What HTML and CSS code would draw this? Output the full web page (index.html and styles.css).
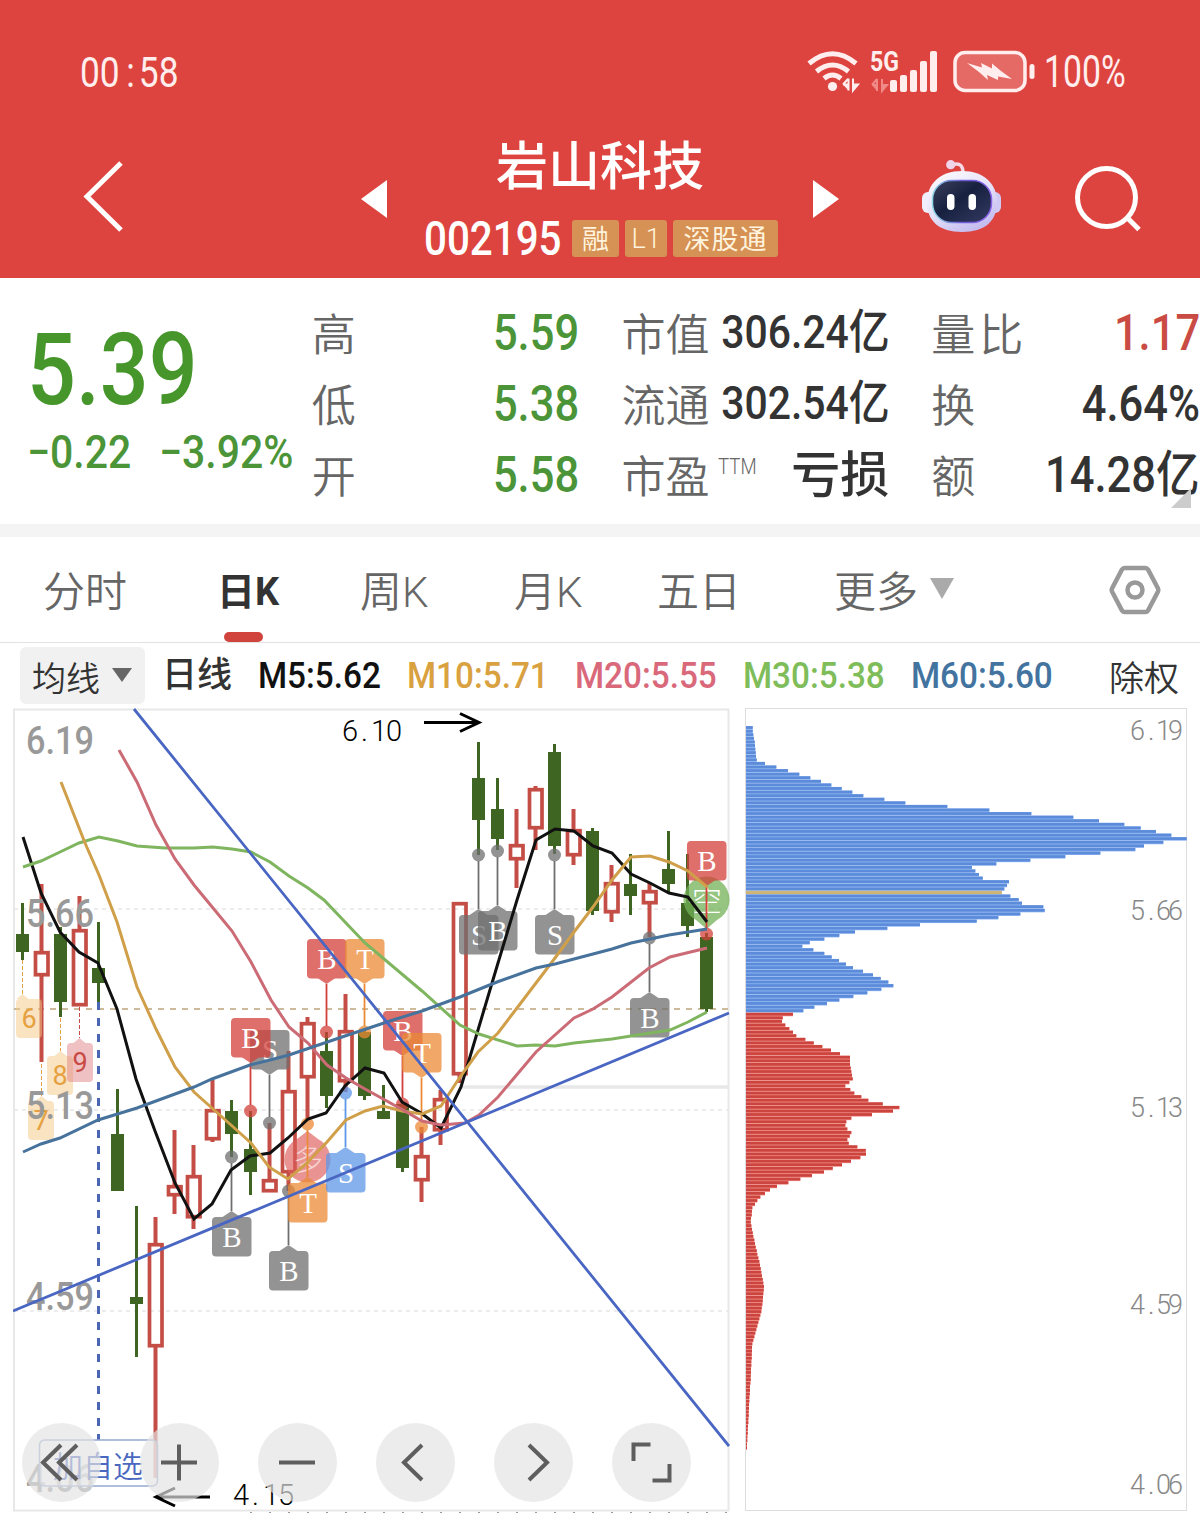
FILE: index.html
```html
<!DOCTYPE html>
<html lang="zh-CN">
<head>
    <meta charset="UTF-8">
    <meta name="viewport" content="width=device-width, initial-scale=1.0">
    <title>岩山科技 002195</title>
    <link rel="stylesheet" href="styles.css">
</head>
<body>
    <header class="header">
        <div class="status-bar">
            <span class="clock">00<i>:</i>58</span>
            <div class="status-right">
                <svg class="status-icons" width="232" height="50" viewBox="806 48 232 50">
                    <!-- wifi -->
                    <g fill="none" stroke="#ffeeed" stroke-width="5">
                        <path d="M809 64.500Q832.500 45 856 64.500"/>
                        <path d="M816.500 72.500Q832.500 59.500 848.500 72.500"/>
                        <path d="M824 79.500Q832.500 72.500 841 79.500"/>
                    </g>
                    <circle cx="832.500" cy="87.500" r="4.600" fill="#ffeeed"/>
                    <path d="M843 85.500H848.500V79.500V91.500M848 80L843 85.500M853 79.500V91.500L858 85.500H853" fill="#ffeeed" stroke="#ffeeed" stroke-width="2"/>
                    <!-- 信号 -->
                    <text class="net" x="870" y="72" textLength="29" lengthAdjust="spacingAndGlyphs">5G</text>
                    <path d="M872 86H877V80V92M877 80L872 86M882 80V92L887 86H882" fill="#f08a86" stroke="#f08a86" stroke-width="2"/>
                    <g fill="#ffeeed">
                        <rect x="890" y="81" width="7" height="12" rx="2"/>
                        <rect x="900" y="76" width="7" height="17" rx="2"/>
                        <rect x="910" y="71" width="7" height="22" rx="2"/>
                        <rect x="920" y="62" width="7" height="31" rx="2"/>
                        <rect x="930" y="52" width="7" height="41" rx="2"/>
                    </g>
                    <!-- 电池 -->
                    <rect x="955" y="53.500" width="70" height="38" rx="10" fill="#e56a66" stroke="#ffeeed" stroke-width="3.500"/>
                    <rect x="1029.500" y="65" width="5" height="15" rx="2.500" fill="#ffeeed"/>
                    <path d="M967 64L982 68.500L981 64L992 69.500L992 64.500L1001 72L1012 80L998 77.500L998 81L987 76L988 81L979 73Z" fill="#ffeeed"/>
                </svg>
                <span class="battery">100%</span>
            </div>
        </div>
        <div class="title-bar">
            <svg class="back" width="42" height="74" viewBox="0 0 42 74"><path d="M39 3L5 36.500L39 70" fill="none" stroke="#fff" stroke-width="5"/></svg>
            <svg class="prev" width="26" height="40" viewBox="0 0 26 40"><path d="M26 1V39L0 20Z" fill="#fff"/></svg>
            <div class="stock">
                <h1>岩山科技</h1>
                <div class="stock-code">
                    <span class="code">002195</span>
                    <span class="tag">融</span>
                    <span class="tag tag-l1">L1</span>
                    <span class="tag tag-sgt">深股通</span>
                </div>
            </div>
            <svg class="next" width="26" height="40" viewBox="0 0 26 40"><path d="M0 1V39L26 20Z" fill="#fff"/></svg>
            <svg class="robot" width="82" height="76" viewBox="921 158 82 76">
                <defs>
                    <linearGradient id="head" x1="0" y1="0" x2="0.600" y2="1">
                        <stop offset="0" stop-color="#fff"/>
                        <stop offset="0.600" stop-color="#e3e0f8"/>
                        <stop offset="1" stop-color="#c5bdf0"/>
                    </linearGradient>
                    <linearGradient id="rim" x1="0" y1="0" x2="1" y2="0">
                        <stop offset="0" stop-color="#8fd8e6"/>
                        <stop offset="0.500" stop-color="#6d5ad8"/>
                        <stop offset="1" stop-color="#8a63e8"/>
                    </linearGradient>
                    <linearGradient id="face" x1="0" y1="0" x2="1" y2="1">
                        <stop offset="0" stop-color="#3b405e"/>
                        <stop offset="0.450" stop-color="#17213f"/>
                        <stop offset="1" stop-color="#343a63"/>
                    </linearGradient>
                </defs>
                <path d="M952 165C960 162 963 166 963 173" fill="none" stroke="#f5d9e6" stroke-width="3.500"/>
                <circle cx="950.700" cy="164.700" r="4.600" fill="#f0d5ea"/>
                <rect x="922" y="192" width="14" height="21" rx="6" fill="#f0eefb"/>
                <rect x="987" y="192" width="14" height="21" rx="6" fill="#cfcaf3"/>
                <path d="M962 171C984 171 997 184 997 202C997 221 985 232 962 232C939 232 927 221 927 202C927 184 940 171 962 171Z" fill="url(#head)"/>
                <rect x="932.500" y="180.500" width="59" height="42" rx="19" fill="url(#face)" stroke="url(#rim)" stroke-width="1.500"/>
                <rect x="947" y="194" width="7.500" height="16" rx="3.700" fill="#fff"/>
                <rect x="968.500" y="194" width="7.500" height="16" rx="3.700" fill="#fff"/>
            </svg>
            <svg class="search" width="68" height="66" viewBox="1074 166 68 66"><circle cx="1106.500" cy="197.500" r="29" fill="none" stroke="#fff" stroke-width="5"/><path d="M1127.500 218L1139 229.500" stroke="#fff" stroke-width="5"/></svg>
        </div>
    </header>

    <section class="quote">
        <div class="price">
            <div class="last"><span>5.39</span></div>
            <div class="change"><span>−0.22</span><span>−3.92%</span></div>
        </div>
        <div class="stats">
            <div class="stat"><label>高</label><b class="down">5.59</b></div>
            <div class="stat"><label>低</label><b class="down">5.38</b></div>
            <div class="stat"><label>开</label><b class="down">5.58</b></div>
        </div>
        <div class="stats">
            <div class="stat"><label>市值</label><b class="small">306.24亿</b></div>
            <div class="stat"><label>流通</label><b class="small">302.54亿</b></div>
            <div class="stat"><label>市盈<sup>TTM</sup></label><b class="cjk">亏损</b></div>
        </div>
        <div class="stats last-col">
            <div class="stat"><label class="wide">量比</label><b class="up">1.17</b></div>
            <div class="stat"><label>换</label><b>4.64%</b></div>
            <div class="stat"><label>额</label><b>14.28亿</b></div>
        </div>
        <i class="corner"></i>
    </section>

    <nav class="tabs">
        <span class="tab">分时</span>
        <span class="tab active">日K</span>
        <span class="tab">周K</span>
        <span class="tab">月K</span>
        <span class="tab">五日</span>
        <span class="tab">更多<i class="arrow"></i></span>
        <svg class="setting" width="54" height="52" viewBox="0 0 54 52"><path d="M16.500 4H37.500Q39 4 40 5.500L50 24.500Q50.700 26 50 27.500L40 46.500Q39 48 37.500 48H16.500Q15 48 14 46.500L4 27.500Q3.300 26 4 24.500L14 5.500Q15 4 16.500 4Z" fill="none" stroke="#999" stroke-width="4.500"/><circle cx="27" cy="26" r="7.500" fill="none" stroke="#999" stroke-width="4.500"/></svg>
    </nav>

    <div class="legend">
        <div class="ma-select"><span>均线</span><i class="arrow"></i></div>
        <span class="kline">日线</span>
        <span class="ma m5">M5:5.62</span>
        <span class="ma m10">M10:5.71</span>
        <span class="ma m20">M20:5.55</span>
        <span class="ma m30">M30:5.38</span>
        <span class="ma m60">M60:5.60</span>
        <span class="adjust">除权</span>
    </div>

    <main class="charts">
        <div class="kchart">
            <svg id="kline" width="717" height="805" viewBox="13 708 717 805"></svg>
            <div class="tools">
                <button><svg viewBox="0 0 79 79"><path d="M39 22L21 39.500L39 57M55 22L37 39.500L55 57"/></svg></button>
                <button><svg viewBox="0 0 79 79"><path d="M21 39.500H57M39 21.500V57.500"/></svg></button>
                <button><svg viewBox="0 0 79 79"><path d="M21 39.500H57"/></svg></button>
                <button><svg viewBox="0 0 79 79"><path d="M46 22L28 39.500L46 57"/></svg></button>
                <button><svg viewBox="0 0 79 79"><path d="M35 22L53 39.500L35 57"/></svg></button>
                <button><svg viewBox="0 0 79 79"><path d="M21.500 38V21.500H38.500M57.500 41V57.500H40.500"/></svg></button>
            </div>
        </div>
        <svg id="chips" width="442" height="805" viewBox="745 708 442 805"></svg>
    </main>
    <script src="script.js"></script>
</body>
</html>
```
FILE: styles.css
```css
* {
    box-sizing: border-box;
}

body {
    margin: 0;
    width: 1200px;
    height: 1513px;
    overflow: hidden;
    background: #fff;
    color: #333;
    font-family: Roboto, 'Noto Sans CJK SC', sans-serif;
}

svg {
    display: block;
    flex: none;
}

/* 顶部 */
.header {
    height: 278px;
    background: #dd443f;
    color: #fff;
}

.status-bar {
    height: 120px;
    padding: 47px 73px 0 80px;
    display: flex;
    justify-content: space-between;
    color: #ffeeed;
    font-size: 43px;
    line-height: 50px;
}

.clock {
    transform: scaleX(0.82);
    transform-origin: left;
}

.clock i {
    margin: 0 5px 0 8px;
    font-style: normal;
}

.status-right {
    display: flex;
    width: 321px;
}

.net {
    font: 700 27px Roboto, sans-serif;
    fill: #ffeeed;
}

.battery {
    margin-left: 6px;
    font-size: 45px;
    transform: scaleX(0.75);
    transform-origin: left;
}

.title-bar {
    height: 158px;
    display: flex;
    align-items: flex-start;
    padding-left: 82px;
}

.back {
    margin-top: 40px;
}

.prev {
    margin: 59px 0 0 237px;
}

.stock {
    width: 426px;
    padding-left: 37px;
}

.stock h1 {
    margin: 10px 0 0 -37px;
    text-align: center;
    font-size: 52px;
    line-height: 76px;
    font-weight: 500;
}

.stock-code {
    display: flex;
    align-items: center;
    height: 37px;
    margin-top: 14px;
}

.code {
    width: 148px;
    font-size: 48px;
    font-weight: 500;
    line-height: 39px;
    transform: scaleX(0.84);
    transform-origin: left;
    white-space: nowrap;
}

.tag {
    width: 47px;
    height: 37px;
    margin-right: 6px;
    border-radius: 3px;
    background: #d69154;
    color: #fff3dd;
    font-size: 27px;
    line-height: 41px;
    text-align: center;
}

.tag-l1 {
    width: 42px;
    font-weight: 300;
    line-height: 38px;
}

.tag-sgt {
    width: 105px;
    letter-spacing: 1px;
}

.next {
    margin-top: 59px;
}

.robot {
    margin: 38px 0 0 82px;
}

.search {
    margin: 46px 0 0 71px;
}

/* 报价 */
.quote {
    position: relative;
    display: flex;
    height: 259px;
    padding-top: 20px;
    border-bottom: 13px solid #f4f4f4;
}

.price {
    width: 312px;
    padding-left: 27px;
    color: #46962c;
    font-weight: 500;
}

.last {
    height: 120px;
    margin-top: 11px;
    font-size: 100px;
    line-height: 122px;
}

.last span,
.change span {
    display: inline-block;
    transform: scaleX(0.86);
    transform-origin: left;
}

.change {
    display: flex;
    color: #4b9437;
    font-size: 46px;
    line-height: 47px;
}

.change span {
    transform: scaleX(0.89);
}

.change span:first-child {
    width: 132px;
}

.stats {
    width: 268px;
    margin-right: 42px;
}

.stats.last-col {
    width: 269px;
    margin-right: 0;
}

.stat {
    display: flex;
    justify-content: space-between;
    height: 71px;
    line-height: 71px;
    white-space: nowrap;
}

.stat label {
    padding-top: 3px;
    font-size: 44px;
    font-weight: 350;
    color: #666;
}

.stat label.wide {
    letter-spacing: 4px;
}

.stat b {
    margin-left: -40px;
    font-size: 50px;
    font-weight: 500;
    transform: scaleX(0.87);
    transform-origin: right;
}

.stat b.small {
    font-size: 47px;
    line-height: 68px;
}

.stat b.cjk {
    font-size: 49px;
    transform: none;
}

.stat sup {
    display: inline-block;
    vertical-align: 19px;
    margin-left: 9px;
    font-size: 22px;
    line-height: 20px;
    font-weight: 300;
    transform: scaleX(0.85);
    transform-origin: left;
}

.down {
    color: #4b9437;
}

.up {
    color: #c94b43;
}

.corner {
    position: absolute;
    right: 9px;
    bottom: 16px;
    border-left: 20px solid transparent;
    border-bottom: 20px solid #ccc;
}

/* 周期切换 */
.tabs {
    display: flex;
    height: 106px;
    padding-left: 43px;
    border-bottom: 1px solid #e2e2e2;
    font-size: 42px;
    font-weight: 350;
    line-height: 111px;
    color: #666;
}

.tab {
    position: relative;
    width: 154px;
    white-space: nowrap;
}

.tab:first-child {
    width: 174px;
}

.tab.active {
    width: 143px;
    font-size: 38px;
    font-weight: 700;
    color: #333;
}

.tab.active::after {
    content: '';
    position: absolute;
    left: 7px;
    bottom: 0;
    width: 39px;
    height: 10px;
    border-radius: 5px;
    background: #d0443d;
}

.tab:nth-child(4) {
    width: 143px;
}

.tab:nth-child(5) {
    width: 177px;
}

.tab:nth-child(6) {
    width: 274px;
}

.arrow {
    display: inline-block;
    margin-left: 12px;
    border: 12px solid transparent;
    border-top: 21px solid #aaa;
    border-bottom: 0;
    vertical-align: 8px;
}

.setting {
    margin-top: 27px;
}

/* 均线 */
.legend {
    display: flex;
    height: 65px;
    padding: 4px 0 0 20px;
    line-height: 58px;
    white-space: nowrap;
}

.ma-select {
    display: flex;
    width: 125px;
    height: 57px;
    padding-left: 12px;
    border-radius: 6px;
    background: #f1f1f1;
    font-size: 34px;
    font-weight: 350;
    line-height: 65px;
}

.ma-select .arrow {
    height: 14px;
    margin: 21px 0 0 12px;
    border-width: 14px 10px 0;
    border-top-color: #666;
}

.kline {
    width: 97px;
    padding-left: 17px;
    font-size: 35px;
    font-weight: 500;
}

.ma {
    width: 168px;
    font-size: 37px;
    font-weight: 500;
    transform: scaleX(0.9);
    transform-origin: left;
}

.m5 {
    width: 149px;
    margin-left: 16px;
    color: #111;
}

.m10 {
    color: #d9a13f;
}

.m20 {
    color: #d9697a;
}

.m30 {
    color: #7fbd5a;
}

.m60 {
    width: 198px;
    color: #43739f;
}

.adjust {
    font-size: 35px;
    font-weight: 350;
    line-height: 65px;
}

/* 图表 */
.charts {
    display: flex;
    gap: 15px;
    padding-left: 13px;
}

.kchart {
    position: relative;
    width: 717px;
    height: 805px;
}

.axis {
    font: 500 38px Roboto, sans-serif;
    fill: #999;
}

.thin {
    font: 300 27px Roboto, sans-serif;
    fill: #888;
}

.extreme {
    font: 300 29px Roboto, sans-serif;
    fill: #000;
}

.mark {
    font: 29px 'Liberation Serif', serif;
    fill: #fff;
    text-anchor: middle;
}

.seq {
    font: 27px Roboto, sans-serif;
    text-anchor: middle;
}

.fav {
    font: 350 30px 'Noto Sans CJK SC', sans-serif;
    fill: #4b68c0;
}

.seal {
    font: 300 30px 'Noto Sans CJK SC', sans-serif;
    fill: #fff;
    text-anchor: middle;
}

.tools {
    position: absolute;
    left: 9px;
    top: 715px;
    display: flex;
    gap: 39px;
}

.tools button {
    width: 79px;
    height: 79px;
    padding: 0;
    border: none;
    border-radius: 50%;
    background: rgba(227, 227, 227, 0.68);
}

.tools svg {
    width: 79px;
    height: 79px;
    fill: none;
    stroke: #5e5e5e;
    stroke-width: 4;
}
```
FILE: script.js
```js
const RED = '#c44d45';
const GREEN = '#3e6522';

// K线: [涨跌, 最高, 实体上沿, 实体下沿, 最低]
const candles = [
    [0, 903, 934, 952, 960], [1, 884, 951, 976, 1062], [0, 927, 934, 1002, 1017],
    [1, 896, 929, 1006, 1006], [0, 922, 968, 983, 1002], [0, 1089, 1134, 1191, 1191],
    [0, 1206, 1297, 1304, 1357], [1, 1217, 1243, 1347, 1478], [1, 1130, 1185, 1196, 1214],
    [1, 1145, 1175, 1218, 1229], [1, 1080, 1109, 1140, 1142], [0, 1100, 1111, 1134, 1157],
    [0, 1111, 1149, 1172, 1195], [1, 1123, 1179, 1192, 1192], [1, 1051, 1090, 1173, 1191],
    [1, 1017, 1022, 1078, 1120], [0, 1032, 1051, 1096, 1108], [1, 994, 1030, 1082, 1092],
    [0, 1030, 1032, 1096, 1100], [0, 1085, 1111, 1119, 1119], [0, 1103, 1104, 1168, 1172],
    [1, 1127, 1155, 1181, 1202], [1, 1090, 1098, 1131, 1145], [1, 902, 902, 1075, 1083],
    [0, 742, 778, 820, 855], [0, 778, 809, 839, 850], [1, 809, 844, 860, 888],
    [1, 786, 788, 829, 850], [0, 744, 752, 846, 854], [1, 809, 829, 856, 865],
    [0, 828, 831, 911, 915], [1, 865, 882, 913, 922], [0, 854, 884, 896, 915],
    [1, 883, 890, 904, 937], [0, 831, 869, 884, 893], [0, 854, 903, 926, 937],
    [0, 933, 937, 1009, 1012]
];

const lines = [
    ['#111', '23,837 41,893 60,932 79,952 98,963 117,1009 136,1079 155,1131 175,1183 194,1219 212,1204 231,1170 250,1156 270,1153 288,1138 308,1119 326,1113 345,1086 365,1068 384,1073 402,1102 421,1113 441,1128 461,1087 478,1030 498,963 517,900 536,840 555,829 574,831 593,846 612,853 631,874 650,883 669,893 688,897 707,922'],
    ['#7fb55f', '23,867 41,861 60,852 79,843 99,837 118,841 137,846 165,848 194,848 213,847 232,849 251,852 270,862 289,876 308,888 324,900 365,943 422,991 460,1025 479,1034 517,1046 536,1045 555,1046 574,1043 612,1039 631,1036 670,1030 688,1022 707,1012'],
    ['#d09f49', '61,782 85,843 99,875 117,922 137,987 156,1029 175,1067 194,1092 231,1125 251,1143 269,1167 288,1179 307,1163 327,1142 346,1120 365,1111 383,1106 402,1111 422,1114 441,1106 460,1077 478,1052 498,1033 517,1008 536,983 555,958 574,932 593,907 612,880 631,857 650,856 669,862 688,871 707,887'],
    ['#cb6b76', '119,750 137,782 156,825 175,859 194,885 213,908 232,931 251,962 271,1000 289,1027 308,1043 327,1065 346,1078 365,1089 385,1100 403,1110 422,1121 441,1125 465,1123 479,1115 498,1097 536,1052 574,1018 593,1009 612,997 649,968 670,957 707,948'],
    ['#46729c', '23,1152 41,1144 60,1138 98,1120 137,1108 194,1087 212,1079 250,1065 270,1060 289,1055 345,1036 393,1020 422,1011 460,997 497,982 536,968 555,964 593,954 612,949 631,943 669,935 707,929']
];

// 买卖点: [字, 颜色, x, 标签顶部, 圆点y, 标签左边]
const R = '#d3403a', G = '#6f6f6f', O = '#eb8a35', B = '#5f97e8';
const marks = [
    ['S', G, 269.5, 1030, 1123, 250], ['B', R, 250.5, 1018, 1111, 231],
    ['B', R, 326.5, 939, 1032, 307], ['T', O, 364.5, 939, 1032, 345],
    ['B', R, 402.5, 1011, 1104, 383], ['T', O, 421.5, 1033, 1127, 402],
    ['B', G, 231.5, 1217, 1157, 212], ['B', G, 288.5, 1251, 1191, 269],
    ['T', O, 307.5, 1183, 1124, 288], ['S', B, 345.5, 1153, 1093, 326],
    ['S', G, 478.5, 915, 855, 459], ['B', G, 497.5, 911, 851, 478],
    ['S', G, 554.5, 915, 855, 535], ['B', G, 649.5, 998, 938, 630],
    ['B', R, 706.5, 841, 934, 687]
];

// 九转序列
const seqs = [
    ['6', 22.5, 16, 999, 960, '#f5c884', '#e5a040'],
    ['7', 41.5, 28, 1101, 1064, '#f5c884', '#e5a040'],
    ['8', 60.5, 47, 1056, 1018, '#f5c884', '#e5a040'],
    ['9', 79.5, 67, 1043, 1007, '#e08586', '#c84a45']
];

function candle(c, i) {
    const x = 22.5 + i * 19;
    const [up, high, top, bottom, low] = c;
    if (!up) {
        return `<path d="M${x} ${high}V${low}" stroke="${GREEN}" stroke-width="3"/>` +
            `<rect x="${x - 6.5}" y="${top}" width="13" height="${bottom - top}" fill="${GREEN}"/>`;
    }
    return `<path d="M${x} ${high}V${top}M${x} ${bottom}V${low}" stroke="${RED}" stroke-width="4"/>` +
        `<rect x="${x - 6}" y="${top + 1.7}" width="12.500" height="${bottom - top - 3}" fill="none" stroke="${RED}" stroke-width="3.700"/>`;
}

function mark(m) {
    const [ch, color, x, top, dot, left] = m;
    const below = top > dot;
    const edge = below ? top : top + 39;
    const tip = below ? top - 6 : top + 45;
    const end = below ? dot + 6 : dot - 6;
    return `<circle cx="${x}" cy="${dot}" r="6.500" fill="${color}" opacity="0.75"/>` +
        `<path d="M${x} ${tip}V${end}" stroke="${color}" stroke-width="1.800"/>` +
        `<g fill="${color}" opacity="0.75"><rect x="${left}" y="${top}" width="39.500" height="39.500" rx="4"/>` +
        `<path d="M${x - 9} ${edge}L${x} ${tip}L${x + 9} ${edge}Z"/></g>` +
        `<text class="mark" x="${left + 20}" y="${top + 29.5}">${ch}</text>`;
}

function seq(s) {
    const [ch, x, left, top, from, bg, color] = s;
    return `<path d="M${x} ${from}V${top - 5}" stroke="${color}" stroke-width="1" stroke-dasharray="4 2"/>` +
        `<g fill="${bg}" opacity="0.500"><rect x="${left}" y="${top}" width="26" height="39" rx="4"/>` +
        `<path d="M${x - 6} ${top}L${x} ${top - 5}L${x + 6} ${top}Z"/></g>` +
        `<text class="seq" x="${left + 13}" y="${top + 29}" fill="${color}">${ch}</text>`;
}

function drawKline() {
    let s = '<rect x="14" y="709.500" width="714.500" height="801" fill="none" stroke="#e8e8e8" stroke-width="2"/>';
    [909, 1110, 1311].forEach(y => {
        s += `<path d="M14 ${y}H729" stroke="#e6e6e6" stroke-width="1.500" stroke-dasharray="4 4"/>`;
    });
    s += '<path d="M462 1087H729" stroke="#e8e8e8" stroke-width="3.500"/>';
    s += '<path d="M14 1009H729" stroke="#bda57c" stroke-width="1.700" stroke-dasharray="6 6"/>';
    s += '<path d="M250 1512.500H729" stroke="#999" stroke-width="1" stroke-dasharray="2 17"/>';
    s += '<path d="M98.500 1002V1440" stroke="#4a67b5" stroke-width="3" stroke-dasharray="8 8"/>';
    s += candles.map(candle).join('');
    s += '<path d="M307.500 1131L318 1139A23 23 0 1 1 297 1139Z" fill="#dd5a58" opacity="0.650"/><text class="seal" x="308" y="1170" opacity="0.600">多</text>';
    s += '<path d="M706.500 929L696 920A23 23 0 1 1 717 920Z" fill="#72b157" opacity="0.750"/><text class="seal" x="707" y="911">空</text>';
    s += seqs.map(seq).join('');
    // 左侧价格轴
    [['6.19', 754], ['5.66', 927], ['5.13', 1119], ['4.59', 1310], ['4.06', 1492]].forEach(([t, y]) => {
        s += `<text class="axis" x="26" y="${y}" textLength="68" lengthAdjust="spacingAndGlyphs">${t}</text>`;
    });
    s += marks.map(mark).join('');
    lines.forEach(([color, pts]) => {
        s += `<polyline points="${pts}" fill="none" stroke="${color}" stroke-width="3"/>`;
    });
    s += '<path d="M134 709L729 1446M13 1311L729 1013" stroke="#4a66c3" stroke-width="2.800"/>';
    s += '<rect x="39.500" y="1440" width="118" height="46" rx="5" fill="#fff" fill-opacity="0.500" stroke="#94a9d0" stroke-width="1.500"/>';
    s += '<text class="fav" x="53" y="1477">加自选</text>';
    s += '<path d="M424 722.500H478M460 713.500L479 722.500L460 731.500M210 1497H157M175 1488L156 1497L175 1506" fill="none" stroke="#000" stroke-width="3"/>';
    s += '<text class="extreme" x="342 361 371 386" y="741">6.10</text>';
    s += '<text class="extreme" x="233 252 263 278" y="1505">4.15</text>';
    document.getElementById('kline').innerHTML = s;
}

// 筹码分布，每行一个长度
const rows = [
    20, 20, 22, 24, 26, 27, 28, 29, 30, 32, 57, 91, 126, 160, 193, 225, 256, 287, 319, 352,
    415, 478, 604, 730, 856, 982, 1059, 1135, 1184, 1230, 1276, 1322, 1252, 1194, 1168, 1063, 958, 853, 751, 678,
    688, 699, 710, 789, 783, 775, 768, 793, 818, 828, 892, 896, 823, 757, 692, 522, 424, 327, 280, 235,
    191, 169, 202, 235, 257, 279, 300, 321, 351, 381, 404, 427, 442, 406, 364, 322, 280, 243, 205, 172,
    141, 110, 108, 118, 130, 141, 151, 178, 203, 229, 255, 282, 312, 312, 312, 314, 316, 318, 320, 310,
    298, 313, 325, 346, 367, 410, 460, 441, 378, 316, 301, 298, 304, 316, 311, 304, 308, 334, 359, 360,
    343, 315, 288, 260, 234, 198, 163, 127, 93, 72, 57, 43, 34, 27, 19, 18, 17, 15, 14, 16,
    18, 20, 22, 25, 27, 29, 32, 34, 37, 40, 42, 44, 46, 48, 50, 52, 54, 53, 52, 51,
    50, 49, 47, 46, 43, 40, 37, 34, 31, 28, 25, 22, 19, 18, 18, 17, 17, 16, 16, 15,
    15, 14, 14, 13, 12, 12, 11, 10, 10, 9, 9, 8, 8, 7, 7, 6, 5, 5, 4, 4, 3, 3
];

function drawChips() {
    let s = '<rect x="745.500" y="708.500" width="441" height="802" fill="none" stroke="#ddd" stroke-width="1"/>';
    rows.forEach((w, i) => {
        const y = 726 + i * 3.583;
        let fill = i < 80 ? '#5b8bd9' : '#cb443d';
        let gap = i < 80 ? '#8cb4f2' : '#f08680';
        if (i === 46) {
            fill = gap = '#d0b578';
        }
        s += `<rect x="746" y="${y.toFixed(2)}" width="${(w / 3).toFixed(1)}" height="3.600" fill="${gap}"/>` +
            `<rect x="746" y="${(y + 0.2).toFixed(2)}" width="${(w / 3).toFixed(1)}" height="2.700" fill="${fill}"/>`;
    });
    [['6.19', 740], ['5.66', 920], ['5.13', 1117], ['4.59', 1314], ['4.06', 1494]].forEach(([t, y]) => {
        s += `<text class="thin" x="1130 1148 1156 1168" y="${y}">${t}</text>`;
    });
    document.getElementById('chips').innerHTML = s;
}

drawKline();
drawChips();
```
